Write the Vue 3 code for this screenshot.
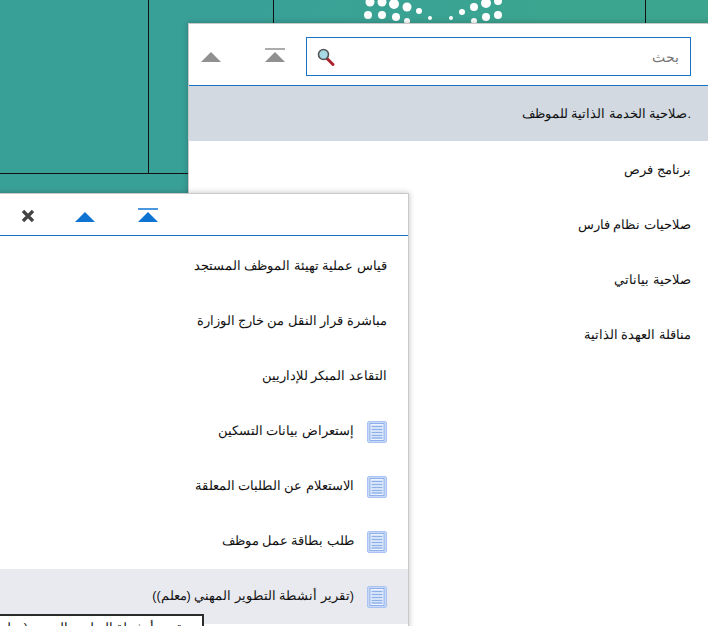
<template>
  <div class="screen">
    <div class="bg-line v1"></div>
    <div class="bg-line v2"></div>
    <div class="bg-line v3"></div>
    <div class="bg-line h1"></div>
    <svg class="dots" width="160" height="26" viewBox="0 0 160 26">
      <circle v-for="(d, i) in dots" :key="i" :cx="d[0]" :cy="d[1]" :r="d[2]" fill="#fff" />
    </svg>

    <section class="panel back">
      <header class="bar">
        <div class="arrows">
          <button class="tri gray"></button>
          <button class="tri gray top"></button>
        </div>
        <div class="search">
          <svg class="lens" width="20" height="20" viewBox="0 0 20 20">
            <path d="M11 11.5l6 6" stroke="#a9232b" stroke-width="3" stroke-linecap="round" />
            <circle cx="7.5" cy="7.5" r="5" fill="#a6dbe6" stroke="#555" stroke-width="1.6" />
          </svg>
          <span class="ph">بحث</span>
        </div>
      </header>
      <ul class="rows">
        <li v-for="(t, i) in backItems" :key="t" :class="{ sel: i === 0 }">{{ t }}</li>
      </ul>
    </section>

    <section class="panel front">
      <header class="bar small">
        <div class="arrows">
          <button class="close">
            <svg width="14" height="14" viewBox="0 0 14 14">
              <path d="M2 2l10 10M12 2L2 12" stroke="#444" stroke-width="3.2" />
            </svg>
          </button>
          <button class="tri blue"></button>
          <button class="tri blue top"></button>
        </div>
      </header>
      <ul class="rows front-rows">
        <li v-for="r in frontItems" :key="r.t" :class="{ hover: r.hover }">
          <svg v-if="r.icon" class="doc" width="20" height="22" viewBox="0 0 20 22">
            <rect x="0.5" y="0.5" width="19" height="21" rx="1.5" fill="#c6d9f8" stroke="#a9c4f2" />
            <rect x="3" y="2.5" width="14" height="17" fill="#eef4fe" stroke="#7fa3e4" stroke-width="0.8" />
            <path d="M4.5 5.5h11M4.5 8.5h11M4.5 11.5h11M4.5 14.5h11M4.5 17h11" stroke="#8db0ea" stroke-width="1.5" />
          </svg>
          <span>{{ r.t }}</span>
        </li>
      </ul>
      <div class="tip">تقرير أنشطة التطوير المهني (معلم)</div>
    </section>
  </div>
</template>

<script setup>
const dots = [
  [20, 2, 4.5], [32, 2, 4.5], [44, 4, 5], [57, 7, 4.5], [69, 11, 3], [18, 15, 4], [32, 15, 4], [46, 17, 4], [57, 21, 3],
  [80, 18, 2], [101, 18, 2], [112, 12, 3], [124, 7, 4], [136, 3, 5], [148, 1, 4], [124, 21, 3], [136, 17, 4], [148, 15, 4]
]

const backItems = [
  '.صلاحية الخدمة الذاتية للموظف',
  'برنامج فرص',
  'صلاحيات نظام فارس',
  'صلاحية بياناتي',
  'مناقلة العهدة الذاتية'
]

const frontItems = [
  { t: 'قياس عملية تهيئة الموظف المستجد' },
  { t: 'مباشرة قرار النقل من خارج الوزارة' },
  { t: 'التقاعد المبكر للإداريين' },
  { t: 'إستعراض بيانات التسكين', icon: true },
  { t: 'الاستعلام عن الطلبات المعلقة', icon: true },
  { t: 'طلب بطاقة عمل موظف', icon: true },
  { t: '(تقرير أنشطة التطوير المهني (معلم))', icon: true, hover: true }
]
</script>

<style scoped>
.screen {
  position: relative;
  width: 708px;
  height: 626px;
  overflow: hidden;
  background: linear-gradient(100deg, #39a098 30%, #3ca58f 70%);
  font-family: "Liberation Sans", Arial, sans-serif;
}
.bg-line { position: absolute; background: #111; }
.v1 { left: 148px; top: 0; width: 1px; height: 174px; }
.v2 { left: 273px; top: 0; width: 1px; height: 23px; }
.v3 { left: 645px; top: 0; width: 1px; height: 23px; }
.h1 { left: 0; top: 173px; width: 188px; height: 1px; }
.dots { position: absolute; left: 350px; top: 0; }

.panel {
  position: absolute;
  box-sizing: border-box;
  background: #fff;
  border: 1px solid #c9c9c9;
  box-shadow: 0 0 6px rgba(0, 0, 0, 0.25);
}
.back { left: 188px; top: 23px; width: 529px; height: 620px; }
.front { left: -40px; top: 193px; width: 449px; height: 440px; overflow: hidden; }

.bar {
  display: flex;
  align-items: center;
  box-sizing: border-box;
  height: 62px;
  padding: 4px 25px 0 12px;
  border-bottom: 1px solid #1a73c0;
  gap: 21px;
}
.bar.small { height: 42px; padding-left: 60px; padding-top: 3px; }
.arrows { display: flex; align-items: center; gap: 44px; margin-top: 1px; }
.bar.small .arrows { gap: 43px; margin-top: 0; }
.bar.small .tri { margin-top: 2px; }
button { padding: 0; border: 0; background: none; }
.close { width: 14px; height: 14px; margin-right: -3px; display: flex; }

.tri {
  position: relative;
  width: 20px;
  height: 10px;
  border-left: 10px solid transparent;
  border-right: 10px solid transparent;
  border-bottom: 10px solid;
  box-sizing: border-box;
}
.tri.gray { color: #909090; }
.tri.blue { color: #0f74d1; }
.tri.top::before {
  content: "";
  position: absolute;
  left: -10px;
  top: -4px;
  width: 20px;
  height: 2px;
  background: currentColor;
  opacity: 0.75;
}
.search {
  flex: 1;
  height: 39px;
  box-sizing: border-box;
  border: 1px solid #1a73c0;
  display: flex;
  align-items: center;
  justify-content: space-between;
  padding: 0 11px 0 9px;
}
.ph { direction: rtl; font-size: 14px; color: #757575; }

.rows { list-style: none; margin: 0; padding: 0; }
.rows li {
  box-sizing: border-box;
  height: 55px;
  direction: rtl;
  display: flex;
  align-items: center;
  padding-top: 2px;
  padding-right: 25px;
  font-size: 13px;
  color: #111;
}
.rows li.sel { background: #d2d9e1; padding-top: 0; }
.front-rows { padding-top: 3px; }
.front-rows li { padding-top: 0; padding-right: 21px; gap: 13px; font-size: 12.6px; }
.front-rows li span { margin-bottom: 2px; }
.front-rows li.hover { background: #e9eaef; }
.doc { flex-shrink: 0; }
.tip {
  position: absolute;
  left: -1px;
  top: 420px;
  width: 244px;
  height: 30px;
  box-sizing: border-box;
  border: 2px solid #2b2b2b;
  background: #fff;
  direction: rtl;
  font-size: 12.6px;
  color: #111;
  padding: 4px 15px;
  white-space: nowrap;
}
</style>
